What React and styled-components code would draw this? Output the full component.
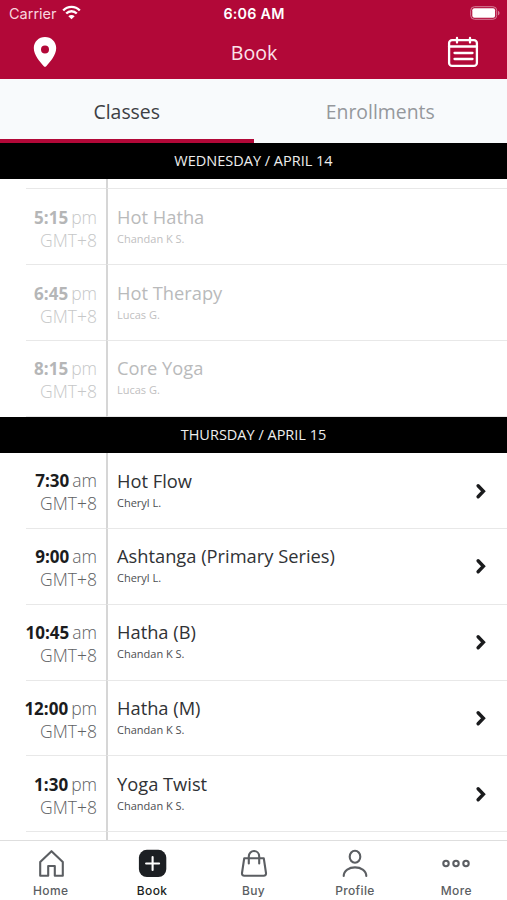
import React from 'react'
import styled, { createGlobalStyle } from 'styled-components'

const GlobalStyle = createGlobalStyle`
  * {
    box-sizing: border-box;
  }

  body {
    margin: 0;
    background: #fff;
    font-family: 'Open Sans', 'Noto Sans', sans-serif;
  }

  button {
    margin: 0;
    padding: 0;
    border: 0;
    background: none;
    color: inherit;
    font: inherit;
  }

  svg {
    display: block;
    flex: none;
  }
`

const Screen = styled.div`
  display: flex;
  flex-direction: column;
  width: 507px;
  height: 900px;
  overflow: hidden;
  background: #fff;
`

const Header = styled.header`
  flex: none;
  height: 79px;
  background: #b20838;
  color: #fff;
`

const StatusBar = styled.div`
  display: grid;
  grid-template-columns: 1fr auto 1fr;
  align-items: center;
  height: 27px;
  padding: 0 7px 0 9px;
  font-family: Inter, sans-serif;
  font-size: 14.3px;
  line-height: 27px;
`

const Carrier = styled.div`
  display: flex;
  align-items: center;
  gap: 5px;
  color: #f8d5df;
  font-size: 14.5px;

  svg {
    margin-top: -2px;
  }
`

const Clock = styled.div`
  padding-right: 1px;
  font-weight: 600;
  letter-spacing: 0.25px;
`

const Battery = styled.div`
  justify-self: end;
  margin-top: -1px;
`

const TitleBar = styled.div`
  display: grid;
  grid-template-columns: 34px 1fr 34px;
  align-items: center;
  height: 50px;
  padding: 0 27px 0 28px;
`

const Title = styled.h1`
  margin: 0;
  padding-top: 2px;
  color: #fbe3ea;
  font-size: 19.6px;
  font-weight: 400;
  line-height: 48px;
  text-align: center;
`

const Tabs = styled.nav`
  display: flex;
  flex: none;
  height: 64px;
  background: #f8fafc;
`

const Tab = styled.button`
  flex: 1;
  padding-top: 5px;
  border-bottom: 4px solid ${({ $active }) => ($active ? '#b20838' : 'transparent')};
  color: ${({ $active }) => ($active ? '#3d4044' : '#95989c')};
  font-size: 19.4px;
  line-height: 55px;
`

const Schedule = styled.main`
  flex: 1;
  min-height: 0;
  overflow: hidden;
`

const DayHeader = styled.h2`
  height: 36.3px;
  margin: 0;
  background: #000;
  color: #eee;
  font-size: 14.5px;
  font-weight: 400;
  line-height: 36px;
  text-align: center;
`

const Row = styled.div`
  display: flex;
  height: ${({ $height }) => $height || '75.8px'};
`

const TimeColumn = styled.div`
  flex: none;
  width: 80px;
  margin-left: 26px;
  padding: 16.3px 9px 0 0;
  border-bottom: 1px solid #e8e8e8;
  color: ${({ $past }) => ($past ? '#c6c7c8' : '#606163')};
  font-size: 17.5px;
  font-weight: 300;
  line-height: 23px;
  text-align: right;
  white-space: nowrap;
`

const TimeLine = styled.div`
  display: flex;
  justify-content: flex-end;
  gap: 3px;
`

const Hour = styled.span`
  color: ${({ $past }) => ($past ? '#b5b6b7' : '#1b1c1e')};
  font-size: 17px;
  font-weight: 700;
`

const Details = styled.div`
  display: flex;
  flex: 1;
  align-items: center;
  justify-content: space-between;
  padding: 0 19px 0 9px;
  border-bottom: 1px solid #e8e8e8;
  border-left: 2px solid #d6d6d6;
`

const Description = styled.div`
  padding-bottom: 1px;
`

const ClassName = styled.div`
  color: ${({ $past }) => ($past ? '#b9babb' : '#303235')};
  font-size: 18.3px;
  line-height: 24px;
`

const Teacher = styled.div`
  margin-top: 1px;
  color: ${({ $past }) => ($past ? '#bfc0c1' : '#4c4e51')};
  font-size: 11px;
  line-height: 18px;
`

const TabBar = styled.footer`
  display: flex;
  flex: none;
  height: 60px;
  border-top: 1px solid #dedede;
  background: #fff;
`

const TabBarItem = styled.button`
  display: flex;
  flex: 1;
  flex-direction: column;
  align-items: center;
  padding-top: 7px;
  color: ${({ $active }) => ($active ? '#1c1f23' : '#5b5e62')};
  font-family: Inter, sans-serif;
  font-size: 12px;
  font-weight: 500;
  line-height: 18px;
  letter-spacing: 0.35px;

  svg {
    margin-bottom: 4px;
  }
`

const WifiIcon = () => (
  <svg width="19" height="15" viewBox="0 0 19 15" fill="none" stroke="#fff" strokeWidth="2.4">
    <path d="M1.2 5.5C5.8 .7 13.2.7 17.8 5.5M4.2 8.5c3-3 7.6-3 10.6 0" />
    <path d="M6.3 11.2c1.8-1.6 4.6-1.6 6.4 0l-3.2 3z" fill="#fff" stroke="none" />
  </svg>
)

const BatteryIcon = () => (
  <svg width="30" height="14" viewBox="0 0 30 14">
    <rect x=".7" y=".7" width="26" height="12.6" rx="3.8" fill="none" stroke="#d5809a" />
    <rect x="2.3" y="2.2" width="22.8" height="9.6" rx="2" fill="#fff" />
    <path d="M28 4.7c2 .8 2 3.8 0 4.6z" fill="#d5809a" />
  </svg>
)

const PinIcon = () => (
  <svg width="34" height="30" viewBox="0 0 34 30">
    <path
      d="M17 0C10.7 0 5.8 4.8 5.8 11c0 7.2 6.3 14 10 18.2.7.8 1.7.8 2.4 0C22 25 28.2 18.2 28.2 11 28.2 4.8 23.3 0 17 0zm0 8.4a4 4 0 1 1 0 8 4 4 0 0 1 0-8z"
      fill="#fff"
      fillRule="evenodd"
    />
  </svg>
)

const CalendarIcon = () => (
  <svg width="34" height="32" viewBox="0 0 34 32" fill="none" stroke="#fff" strokeWidth="2.3" strokeLinecap="round">
    <rect x="3.1" y="4.1" width="27.8" height="25.8" rx="3" />
    <path d="M3 10.5h28M11 2v4.5M24 2v4.5M8.5 17h18M8.5 23h18" />
  </svg>
)

const ChevronIcon = () => (
  <svg width="14" height="18" viewBox="0 0 14 18" fill="none" stroke="#1a1b1d" strokeWidth="3.4" strokeLinecap="round">
    <path d="M4.1 3.8 9.4 9.3 4.1 14.8" />
  </svg>
)

const iconProps = {
  width: 30,
  height: 30,
  viewBox: '0 0 30 30',
  fill: 'none',
  stroke: 'currentColor',
  strokeWidth: 2.1,
  strokeLinejoin: 'round',
  strokeLinecap: 'round',
}

const HomeIcon = () => (
  <svg {...iconProps}>
    <path d="M4.2 14 15.5 3.2 26.8 14v13.7h-8V18h-6.6v9.7h-8z" />
  </svg>
)

const BookIcon = () => (
  <svg {...iconProps}>
    <rect x="1.9" y="1.8" width="27.4" height="27.2" rx="8" fill="currentColor" stroke="none" />
    <path d="M15.6 9v13M9.1 15.5h13" stroke="#fff" />
  </svg>
)

const BagIcon = () => (
  <svg {...iconProps}>
    <path d="M5.2 10.3h19.6l2.2 14.7q.2 2.7-2.3 2.7H5.3q-2.5 0-2.3-2.7z" />
    <path d="M9.8 15.5V8.5c0-7.3 10.4-7.3 10.4 0v7" />
  </svg>
)

const ProfileIcon = () => (
  <svg {...iconProps}>
    <ellipse cx="15" cy="8.8" rx="5.3" ry="6" />
    <path d="M3.7 28c0-11.5 22.6-11.5 22.6 0" />
  </svg>
)

const MoreIcon = () => (
  <svg {...iconProps}>
    <circle cx="5" cy="15.5" r="2.7" />
    <circle cx="15" cy="15.5" r="2.7" />
    <circle cx="25" cy="15.5" r="2.7" />
  </svg>
)

const days = [
  {
    label: 'WEDNESDAY / APRIL 14',
    past: true,
    classes: [
      { time: '5:15', period: 'pm', name: 'Hot Hatha', teacher: 'Chandan K S.' },
      { time: '6:45', period: 'pm', name: 'Hot Therapy', teacher: 'Lucas G.' },
      { time: '8:15', period: 'pm', name: 'Core Yoga', teacher: 'Lucas G.' },
    ],
  },
  {
    label: 'THURSDAY / APRIL 15',
    classes: [
      { time: '7:30', period: 'am', name: 'Hot Flow', teacher: 'Cheryl L.' },
      { time: '9:00', period: 'am', name: 'Ashtanga (Primary Series)', teacher: 'Cheryl L.' },
      { time: '10:45', period: 'am', name: 'Hatha (B)', teacher: 'Chandan K S.' },
      { time: '12:00', period: 'pm', name: 'Hatha (M)', teacher: 'Chandan K S.' },
      { time: '1:30', period: 'pm', name: 'Yoga Twist', teacher: 'Chandan K S.' },
    ],
  },
]

const tabBarItems = [
  { label: 'Home', Icon: HomeIcon },
  { label: 'Book', Icon: BookIcon, active: true },
  { label: 'Buy', Icon: BagIcon },
  { label: 'Profile', Icon: ProfileIcon },
  { label: 'More', Icon: MoreIcon },
]

const ClassRow = ({ time, period, name, teacher, past }) => (
  <Row>
    <TimeColumn $past={past}>
      <TimeLine>
        <Hour $past={past}>{time}</Hour>
        <span>{period}</span>
      </TimeLine>
      <div>GMT+8</div>
    </TimeColumn>
    <Details>
      <Description>
        <ClassName $past={past}>{name}</ClassName>
        <Teacher $past={past}>{teacher}</Teacher>
      </Description>
      {!past && <ChevronIcon />}
    </Details>
  </Row>
)

const EdgeTime = styled.div`
  flex: none;
  width: 80px;
  margin-left: 26px;
  border-bottom: 1px solid #e8e8e8;
`

// Slice of a row that is scrolled partly out of view
const RowEdge = ({ height }) => (
  <Row $height={height}>
    <EdgeTime />
    <Details />
  </Row>
)

const App = () => (
  <>
    <GlobalStyle />
    <Screen>
      <Header>
        <StatusBar>
          <Carrier>
            Carrier
            <WifiIcon />
          </Carrier>
          <Clock>6:06 AM</Clock>
          <Battery>
            <BatteryIcon />
          </Battery>
        </StatusBar>
        <TitleBar>
          <PinIcon />
          <Title>Book</Title>
          <CalendarIcon />
        </TitleBar>
      </Header>
      <Tabs>
        <Tab $active>Classes</Tab>
        <Tab>Enrollments</Tab>
      </Tabs>
      <Schedule>
        {days.map(({ label, past, classes }) => (
          <React.Fragment key={label}>
            <DayHeader>{label}</DayHeader>
            {past && <RowEdge height="10.2px" />}
            {classes.map(item => (
              <ClassRow key={item.time} past={past} {...item} />
            ))}
          </React.Fragment>
        ))}
        <RowEdge height="75.8px" />
      </Schedule>
      <TabBar>
        {tabBarItems.map(({ label, Icon, active }) => (
          <TabBarItem key={label} $active={active}>
            <Icon />
            {label}
          </TabBarItem>
        ))}
      </TabBar>
    </Screen>
  </>
)

export default App
